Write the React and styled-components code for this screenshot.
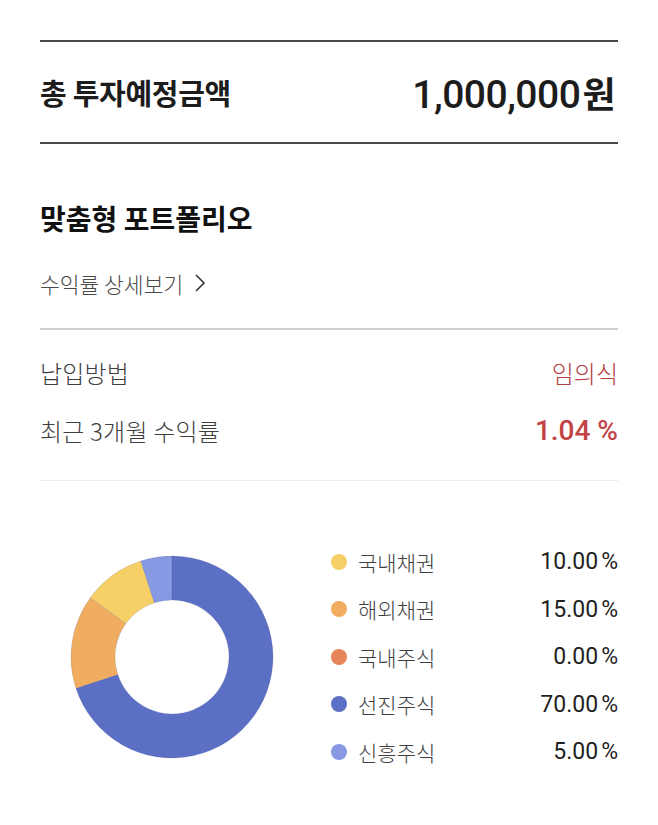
import React from "react"
import styled, { createGlobalStyle } from "styled-components"

const GlobalStyle = createGlobalStyle`
    body {
        margin: 0;
        background: #fff;
        font-family: "Noto Sans CJK KR", "Noto Sans", sans-serif;
        -webkit-font-smoothing: antialiased;
    }
`

const assets = [
    { name: "국내채권", rate: 10, color: "#f6cf66" },
    { name: "해외채권", rate: 15, color: "#f1ad5f" },
    { name: "국내주식", rate: 0, color: "#e6845a" },
    { name: "선진주식", rate: 70, color: "#5b6fc4" },
    { name: "신흥주식", rate: 5, color: "#8799e2" },
]

// clockwise from 12 o'clock
const sliceOrder = ["선진주식", "해외채권", "국내채권", "신흥주식"]

const polar = (cx, cy, r, deg) => {
    const rad = ((deg - 90) * Math.PI) / 180
    return [cx + r * Math.cos(rad), cy + r * Math.sin(rad)]
}

const arcPath = (cx, cy, r1, r0, start, end) => {
    const [x1, y1] = polar(cx, cy, r1, start)
    const [x2, y2] = polar(cx, cy, r1, end)
    const [x3, y3] = polar(cx, cy, r0, end)
    const [x4, y4] = polar(cx, cy, r0, start)
    const large = end - start > 180 ? 1 : 0
    return `M${x1} ${y1} A${r1} ${r1} 0 ${large} 1 ${x2} ${y2} L${x3} ${y3} A${r0} ${r0} 0 ${large} 0 ${x4} ${y4} Z`
}

const Donut = () => {
    let angle = 0
    return (
        <ChartSvg width="204" height="204" viewBox="0 0 204 204">
            {sliceOrder.map((name) => {
                const item = assets.find((a) => a.name === name)
                const start = angle
                const end = angle + (item.rate / 100) * 360
                angle = end
                return (
                    <path
                        key={name}
                        d={arcPath(102, 102, 101, 57, start, end)}
                        fill={item.color}
                        stroke="rgba(60,70,120,0.25)"
                        strokeWidth="0.6"
                    />
                )
            })}
        </ChartSvg>
    )
}

const App = () => {
    return (
        <Root>
            <GlobalStyle />
            <TotalRow>
                <TotalLabel>총 투자예정금액</TotalLabel>
                <TotalAmount>
                    1,000,000<Won>원</Won>
                </TotalAmount>
            </TotalRow>

            <PortfolioBlock>
                <PortfolioTitle>맞춤형 포트폴리오</PortfolioTitle>
                <DetailLink>
                    수익률 상세보기
                    <svg width="14" height="22" viewBox="0 0 14 22">
                        <polyline points="3,3 11,11 3,19" fill="none" stroke="#333" strokeWidth="1.6" />
                    </svg>
                </DetailLink>
            </PortfolioBlock>

            <InfoBlock>
                <InfoRow>
                    <InfoLabel>납입방법</InfoLabel>
                    <InfoValue>임의식</InfoValue>
                </InfoRow>
                <InfoRow>
                    <InfoLabel>최근 3개월 수익률</InfoLabel>
                    <RateValue>1.04 %</RateValue>
                </InfoRow>
            </InfoBlock>

            <ChartBlock>
                <Donut />
                <Legend>
                    {assets.map((item) => (
                        <LegendRow key={item.name}>
                            <Dot color={item.color} />
                            <LegendName>{item.name}</LegendName>
                            <LegendRate>
                                {item.rate.toFixed(2)}
                                <Percent>%</Percent>
                            </LegendRate>
                        </LegendRow>
                    ))}
                </Legend>
            </ChartBlock>
        </Root>
    )
}

const Root = styled.main`
    padding: 40px 40px 20px;
`

const TotalRow = styled.section`
    display: flex;
    align-items: center;
    justify-content: space-between;
    height: 100px;
    border-top: 2px solid #4a4a4a;
    border-bottom: 2px solid #4a4a4a;
`

const TotalLabel = styled.h2`
    margin: 0;
    font-size: 29px;
    font-weight: 700;
    color: #1c1c1c;
    letter-spacing: -0.3px;
`

const TotalAmount = styled.div`
    font-family: Roboto, "Noto Sans CJK KR", sans-serif;
    font-size: 39px;
    font-weight: 500;
    color: #1c1c1c;
    letter-spacing: -0.5px;
    display: flex;
    align-items: baseline;
    margin-right: 3px;
`

const Won = styled.span`
    font-family: "Noto Sans CJK KR", sans-serif;
    font-size: 36px;
    font-weight: 700;
    margin-left: 2px;
`

const PortfolioBlock = styled.section`
    padding: 55px 0 30px;
    border-bottom: 2px solid #d0d0d0;
`

const PortfolioTitle = styled.h2`
    margin: 0;
    font-size: 28px;
    line-height: 38px;
    font-weight: 700;
    color: #111;
`

const DetailLink = styled.a`
    display: flex;
    align-items: center;
    gap: 10px;
    margin-top: 31px;
    height: 30px;
    font-size: 21.5px;
    font-weight: 300;
    color: #4a4a4a;
    cursor: pointer;
`

const InfoBlock = styled.section`
    display: flex;
    flex-direction: column;
    gap: 28px;
    padding: 27px 0 35px;
    border-bottom: 1px solid #ececec;
`

const InfoRow = styled.div`
    display: flex;
    align-items: center;
    justify-content: space-between;
    height: 30px;
`

const InfoLabel = styled.span`
    font-size: 24px;
    font-weight: 300;
    color: #3f3f3f;
    letter-spacing: 0.2px;
`

const InfoValue = styled.span`
    font-size: 24px;
    font-weight: 300;
    color: #b3403f;
`

const RateValue = styled.span`
    font-family: Roboto, sans-serif;
    font-size: 28px;
    font-weight: 500;
    color: #c24446;
`

const ChartBlock = styled.section`
    display: flex;
    align-items: center;
    padding-top: 57px;
`

const ChartSvg = styled.svg`
    flex: none;
    margin-left: 30px;
`

const Legend = styled.ul`
    flex: 1;
    margin: 0 0 0 57px;
    padding: 0;
    list-style: none;
`

const LegendRow = styled.li`
    display: flex;
    align-items: center;
    height: 47.5px;
`

const Dot = styled.span`
    width: 16px;
    height: 16px;
    border-radius: 50%;
    background: ${(props) => props.color};
    margin-right: 11px;
`

const LegendName = styled.span`
    flex: 1;
    font-size: 21px;
    font-weight: 300;
    color: #3f3f3f;
`

const LegendRate = styled.span`
    font-family: Roboto, sans-serif;
    font-size: 23px;
    font-weight: 400;
    color: #1f1f1f;
`

const Percent = styled.span`
    margin-left: 3px;
`

export default App
